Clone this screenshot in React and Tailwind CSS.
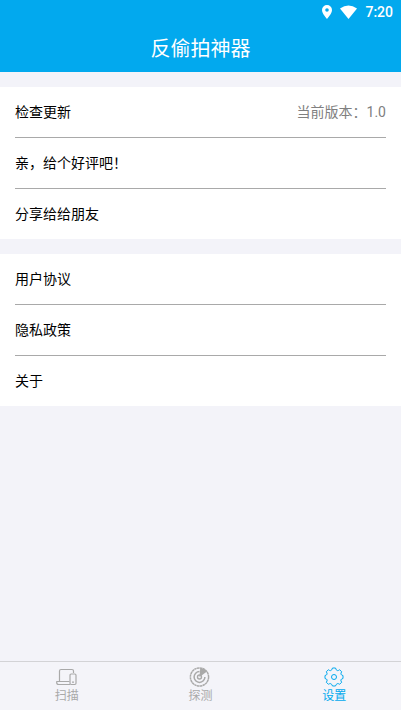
import { useState } from 'react';
import clsx from 'clsx';

const groups = [
  [
    { label: '检查更新', extra: '当前版本：1.0' },
    { label: '亲，给个好评吧！' },
    { label: '分享给给朋友' },
  ],
  [{ label: '用户协议' }, { label: '隐私政策' }, { label: '关于' }],
];

function ScanIcon() {
  return (
    <svg viewBox="0 0 22 20" className="h-5 w-[22px]" fill="none" stroke="currentColor" strokeWidth="1.2" strokeLinejoin="round">
      <path d="M3.5 14V4Q3.5 2.5 5 2.5H16Q17.5 2.5 17.5 4V6" />
      <path d="M13.5 14.5H.7V15.5Q.7 17.5 2.7 17.5H14" />
      <rect x="14" y="7" width="6" height="10.5" rx="1.2" />
      <path d="M16 15.2H18" />
    </svg>
  );
}

function RadarIcon() {
  return (
    <svg viewBox="0 0 22 20" className="h-5 w-[22px]" fill="none" stroke="currentColor">
      <circle cx="10.5" cy="10" r="9.1" strokeWidth="1.5" strokeDasharray="2.5 .36" />
      <path d="M10.5 4.6A5.4 5.4 0 1 0 15.9 10" strokeWidth="1.5" />
      <circle cx="10.5" cy="10" r="2" strokeWidth="1.4" />
      <path d="M10.5 10L11.2 1Q15.5 1.4 18 4.6Z" fill="currentColor" stroke="none" />
    </svg>
  );
}

function GearIcon() {
  return (
    <svg viewBox="0 0 22 20" className="h-5 w-[22px]" fill="none" stroke="currentColor" strokeWidth="1" strokeLinejoin="round">
      <path d="M9.5 1H12.5Q13 3.3 14.4 3.6Q15.4 3.8 16.6 2.7L18.7 4.8Q17.6 6.2 18 7.2Q18.4 8.3 20 8.5V11.5Q18.3 11.8 17.9 12.9Q17.6 13.9 18.7 15.2L16.6 17.3Q15.3 16.3 14.2 16.7Q13.1 17.1 12.5 19H9.5Q8.9 17.1 7.8 16.7Q6.7 16.3 5.4 17.3L3.3 15.2Q4.4 13.9 4.1 12.9Q3.7 11.8 2 11.5V8.5Q3.6 8.3 4 7.2Q4.4 6.2 3.3 4.8L5.4 2.7Q6.6 3.8 7.6 3.6Q9 3.3 9.5 1Z" />
      <circle cx="11" cy="10" r="2.5" />
    </svg>
  );
}

const tabs = [
  { id: 'scan', label: '扫描', Icon: ScanIcon },
  { id: 'detect', label: '探测', Icon: RadarIcon },
  { id: 'settings', label: '设置', Icon: GearIcon },
];

function StatusBar() {
  return (
    <div className="flex h-6 items-center justify-end gap-2 pr-2 text-white">
      <svg viewBox="0 0 10 14" className="h-[14px] w-[10px]" fill="currentColor">
        <path fillRule="evenodd" d="M5 0A5 5 0 0 0 0 5C0 8.6 5 14 5 14S10 8.6 10 5A5 5 0 0 0 5 0ZM5 3.2A1.8 1.8 0 1 1 5 6.8A1.8 1.8 0 0 1 5 3.2Z" />
      </svg>
      <svg viewBox="0 0 17 14" className="h-[14px] w-[17px]" fill="currentColor">
        <path d="M0 3.4Q8.5-2.6 17 3.4L8.5 14Z" />
      </svg>
      <span className="font-['Roboto',sans-serif] text-sm font-medium">7:20</span>
    </div>
  );
}

export default function App() {
  const [active, setActive] = useState('settings');

  return (
    <div className="flex min-h-screen flex-col bg-[#f3f3f9] font-['Roboto','Noto_Sans_CJK_SC',sans-serif]">
      <header className="bg-[#02a9ee]">
        <StatusBar />
        <h1 className="flex h-12 items-center justify-center pt-0.5 text-xl text-white">反偷拍神器</h1>
      </header>

      <main className="flex flex-1 flex-col gap-[15px] py-[15px]">
        {groups.map((rows, i) => (
          <ul key={i} className="divide-y divide-[#a9a9a9] bg-white px-[15px]">
            {rows.map((row) => (
              <li key={row.label}>
                <button type="button" className="flex h-[50px] w-full items-center justify-between text-sm text-black">
                  <span>{row.label}</span>
                  {row.extra && <span className="text-[#808080]">{row.extra}</span>}
                </button>
              </li>
            ))}
          </ul>
        ))}
      </main>

      <nav className="sticky bottom-0 grid h-[49px] grid-cols-3 border-t border-[#d3d3d6] bg-[#f4f4f9]">
        {tabs.map(({ id, label, Icon }) => (
          <button
            key={id}
            type="button"
            onClick={() => setActive(id)}
            className={clsx('flex flex-col items-center gap-px pt-[5px] text-xs', active === id ? 'text-[#02a9ee]' : 'text-[#a9a9a9]')}
          >
            <Icon />
            <span>{label}</span>
          </button>
        ))}
      </nav>
    </div>
  );
}
